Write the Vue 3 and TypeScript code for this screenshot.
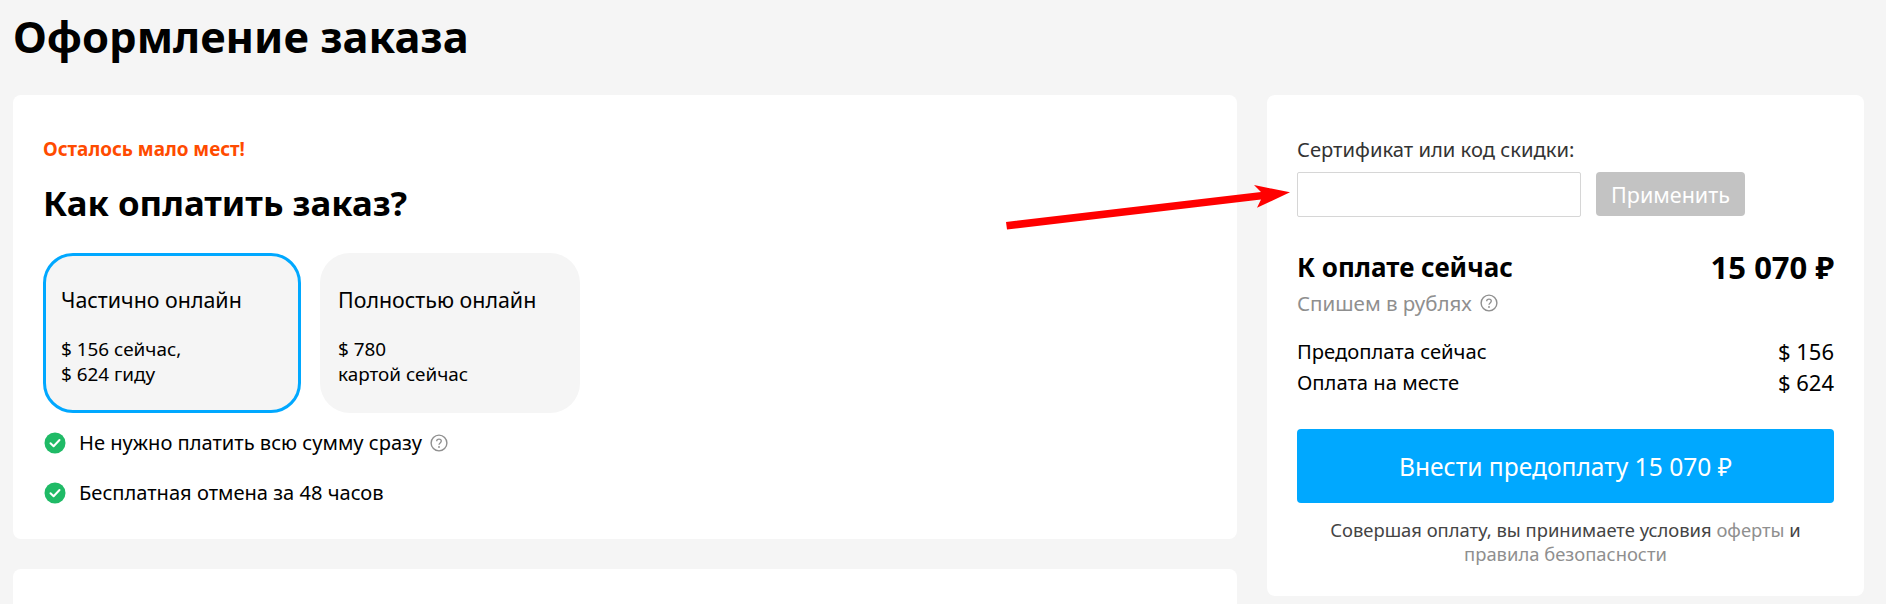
<script setup lang="ts">
interface Tile {
  title: string
  lines: string[]
  active: boolean
}

const tiles: Tile[] = [
  { title: 'Частично онлайн', lines: ['$ 156 сейчас,', '$ 624 гиду'], active: true },
  { title: 'Полностью онлайн', lines: ['$ 780', 'картой сейчас'], active: false },
]
</script>

<template>
  <div class="page">
    <h1 class="page-title">Оформление заказа</h1>

    <div class="columns">
      <div class="left">
        <section class="card pay-card">
          <div class="hot">Осталось мало мест!</div>
          <h2 class="pay-title">Как оплатить заказ?</h2>

          <div class="tiles">
            <div v-for="t in tiles" :key="t.title" class="tile" :class="{ active: t.active }">
              <div class="tile-title">{{ t.title }}</div>
              <div class="tile-lines">
                <div v-for="l in t.lines" :key="l">{{ l }}</div>
              </div>
            </div>
          </div>

          <ul class="perks">
            <li>
              <svg class="check" viewBox="0 0 22 22" width="22" height="22">
                <circle cx="11" cy="11" r="10.5" fill="#1fba66" />
                <path d="M6.5 11.2l3.1 3 5.9-6.2" fill="none" stroke="#fff" stroke-width="2" stroke-linecap="round" stroke-linejoin="round" />
              </svg>
              <span>Не нужно платить всю сумму сразу</span>
              <svg class="hint" viewBox="0 0 18 18" width="18" height="18">
                <circle cx="9" cy="9" r="7.9" fill="none" stroke="#8f8f8f" stroke-width="1.4" />
                <path d="M6.7 7.2c0-1.3 1-2.1 2.3-2.1s2.3.8 2.3 2c0 1.8-2.3 1.8-2.3 3.6" fill="none" stroke="#8f8f8f" stroke-width="1.3" />
                <circle cx="9" cy="13" r=".9" fill="#8f8f8f" />
              </svg>
            </li>
            <li>
              <svg class="check" viewBox="0 0 22 22" width="22" height="22">
                <circle cx="11" cy="11" r="10.5" fill="#1fba66" />
                <path d="M6.5 11.2l3.1 3 5.9-6.2" fill="none" stroke="#fff" stroke-width="2" stroke-linecap="round" stroke-linejoin="round" />
              </svg>
              <span>Бесплатная отмена за 48 часов</span>
            </li>
          </ul>
        </section>

        <section class="card next-card"></section>
      </div>

      <aside class="card summary">
        <label class="promo-label">Сертификат или код скидки:</label>
        <div class="promo-row">
          <input class="promo-input" type="text" />
          <button class="promo-btn" disabled>Применить</button>
        </div>

        <div class="total-row">
          <span>К оплате сейчас</span>
          <span class="total-sum">15 070 ₽</span>
        </div>
        <div class="rub-note">
          <span>Спишем в рублях</span>
          <svg class="hint" viewBox="0 0 18 18" width="18" height="18">
            <circle cx="9" cy="9" r="7.9" fill="none" stroke="#8f8f8f" stroke-width="1.4" />
            <path d="M6.7 7.2c0-1.3 1-2.1 2.3-2.1s2.3.8 2.3 2c0 1.8-2.3 1.8-2.3 3.6" fill="none" stroke="#8f8f8f" stroke-width="1.3" />
            <circle cx="9" cy="13" r=".9" fill="#8f8f8f" />
          </svg>
        </div>

        <div class="line-row first"><span>Предоплата сейчас</span><span class="amount">$ 156</span></div>
        <div class="line-row"><span>Оплата на месте</span><span class="amount">$ 624</span></div>

        <button class="pay-btn">Внести предоплату 15 070 ₽</button>

        <p class="terms">
          Совершая оплату, вы принимаете условия <a>оферты</a> и<br />
          <a>правила безопасности</a>
        </p>
      </aside>
    </div>

    <!-- red annotation arrow drawn over the screenshot -->
    <svg class="arrow" viewBox="0 0 1886 604" width="1886" height="604">
      <polygon points="1006,222 1261,192 1254,185 1290,192.3 1257,207.7 1261,199.5 1007,229.5" fill="#ff0000" />
    </svg>
  </div>
</template>

<style>
html, body {
  margin: 0;
  height: 100%;
  overflow: hidden;
  background: #f5f5f5;
}
</style>

<style scoped>
.page {
  position: relative;
  height: 604px;
  overflow: hidden;
  box-sizing: border-box;
  padding: 0 22px 0 13px;
  background: #f5f5f5;
  font-family: "Noto Sans", "Open Sans", sans-serif;
  color: #000;
}

.page-title {
  margin: 0;
  height: 95px;
  padding-top: 8px;
  box-sizing: border-box;
  font-size: 43.5px;
  line-height: 56px;
  font-weight: 700;
}

.columns {
  display: grid;
  grid-template-columns: 1224px 597px;
  gap: 30px;
  align-items: start;
}

.left {
  display: flex;
  flex-direction: column;
  gap: 30px;
}

.card {
  background: #fff;
  border-radius: 8px;
}

.pay-card {
  height: 444px;
  box-sizing: border-box;
  padding: 42px 30px 0;
}

.next-card {
  height: 120px;
}

.hot {
  font-size: 18.9px;
  line-height: 24px;
  font-weight: 700;
  color: #ff4b00;
}

.pay-title {
  margin: 20px 0 0;
  font-size: 34.8px;
  line-height: 44px;
  font-weight: 700;
}

.tiles {
  display: flex;
  gap: 19px;
  margin-top: 28px;
}

.tile {
  width: 260px;
  height: 160px;
  box-sizing: border-box;
  padding: 34px 18px 0;
  background: #f5f5f5;
  border-radius: 30px;
}

.tile.active {
  width: 258px;
  padding: 31px 15px 0;
  border: 3px solid #00a8ff;
}

.tile-title {
  font-size: 21.4px;
  line-height: 26px;
}

.tile-lines {
  margin-top: 24px;
  font-size: 18.9px;
  line-height: 25px;
}

.perks {
  list-style: none;
  margin: 17px 0 0;
  padding: 0;
  font-size: 20.1px;
  line-height: 26px;
}

.perks li {
  display: flex;
  align-items: center;
  height: 26px;
  margin-bottom: 24px;
}

.check {
  margin-right: 13px;
  margin-left: 1px;
}

.hint {
  margin-left: 8px;
}

.summary {
  height: 501px;
  box-sizing: border-box;
  padding: 42px 30px 0;
}

.promo-label {
  display: block;
  font-size: 20.2px;
  line-height: 24px;
  color: #333;
}

.promo-row {
  display: flex;
  gap: 15px;
  margin-top: 11px;
}

.promo-input {
  width: 284px;
  height: 45px;
  box-sizing: border-box;
  border: 1px solid #d6d6d6;
  border-radius: 2px;
  background: #fff;
  padding: 0 10px;
}

.promo-btn {
  width: 149px;
  height: 44px;
  padding: 0;
  border: none;
  border-radius: 4px;
  background: #c3c3c3;
  color: #fff;
  font: inherit;
  font-size: 21.5px;
}

.total-row {
  display: flex;
  justify-content: space-between;
  align-items: center;
  margin-top: 33px;
  font-size: 26px;
  line-height: 34px;
  font-weight: 700;
}

.total-sum {
  font-size: 31px;
}

.rub-note {
  display: flex;
  align-items: center;
  margin-top: 6px;
  font-size: 20.5px;
  line-height: 26px;
  color: #8f8f8f;
}

.line-row {
  display: flex;
  justify-content: space-between;
  font-size: 20.2px;
  line-height: 31px;
}

.line-row.first {
  margin-top: 20px;
}

.amount {
  font-size: 22px;
}

.pay-btn {
  display: block;
  width: 100%;
  height: 74px;
  margin-top: 31px;
  border: none;
  border-radius: 4px;
  background: #00a8ff;
  color: #fff;
  font: inherit;
  font-size: 24.6px;
}

.terms {
  margin: 15px 0 0;
  text-align: center;
  font-size: 18.4px;
  line-height: 24px;
  color: #444;
}

.terms a {
  color: #8f8f8f;
}

.arrow {
  position: absolute;
  left: 0;
  top: 0;
  pointer-events: none;
}
</style>
